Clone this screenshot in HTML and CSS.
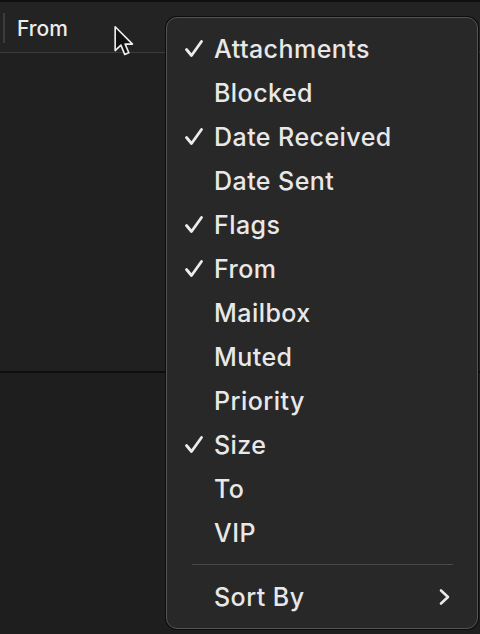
FILE: index.html
```html
<!DOCTYPE html>
<html>
<head>
<meta charset="utf-8">
<link rel="stylesheet" href="styles.css">
</head>
<body>
<div class="window">
  <div class="header">
    <span class="sep"></span>
    <span class="col-title">From</span>
  </div>
  <div class="pane"></div>
  <div class="lower"></div>

  <svg class="cursor" width="26" height="36" viewBox="0 0 24 32">
    <path d="M2 1 L2 23 L7.3 18 L10.8 26.5 L14.6 25 L11.2 17 L18 17 Z" fill="#111" stroke="#eee" stroke-width="1.5" stroke-linejoin="round"/>
  </svg>

  <div class="menu">
    <div class="item"><span class="check"><svg width="20" height="20" viewBox="0 0 20 20"><path d="M2.5 10.5 L7.5 16.5 L17.5 2.5" fill="none" stroke="#ececec" stroke-width="2.8" stroke-linecap="round" stroke-linejoin="round"/></svg></span><span>Attachments</span></div>
    <div class="item"><span class="check"></span><span>Blocked</span></div>
    <div class="item"><span class="check"><svg width="20" height="20" viewBox="0 0 20 20"><path d="M2.5 10.5 L7.5 16.5 L17.5 2.5" fill="none" stroke="#ececec" stroke-width="2.8" stroke-linecap="round" stroke-linejoin="round"/></svg></span><span>Date Received</span></div>
    <div class="item"><span class="check"></span><span>Date Sent</span></div>
    <div class="item"><span class="check"><svg width="20" height="20" viewBox="0 0 20 20"><path d="M2.5 10.5 L7.5 16.5 L17.5 2.5" fill="none" stroke="#ececec" stroke-width="2.8" stroke-linecap="round" stroke-linejoin="round"/></svg></span><span>Flags</span></div>
    <div class="item"><span class="check"><svg width="20" height="20" viewBox="0 0 20 20"><path d="M2.5 10.5 L7.5 16.5 L17.5 2.5" fill="none" stroke="#ececec" stroke-width="2.8" stroke-linecap="round" stroke-linejoin="round"/></svg></span><span>From</span></div>
    <div class="item"><span class="check"></span><span>Mailbox</span></div>
    <div class="item"><span class="check"></span><span>Muted</span></div>
    <div class="item"><span class="check"></span><span>Priority</span></div>
    <div class="item"><span class="check"><svg width="20" height="20" viewBox="0 0 20 20"><path d="M2.5 10.5 L7.5 16.5 L17.5 2.5" fill="none" stroke="#ececec" stroke-width="2.8" stroke-linecap="round" stroke-linejoin="round"/></svg></span><span>Size</span></div>
    <div class="item"><span class="check"></span><span>To</span></div>
    <div class="item"><span class="check"></span><span>VIP</span></div>
    <div class="divider"></div>
    <div class="item sub"><span class="check"></span><span class="label">Sort By</span>
      <svg class="chev" width="14" height="18" viewBox="0 0 14 18"><path d="M3 2.5 L10 9 L3 15.5" fill="none" stroke="#e8e8e8" stroke-width="2.6" stroke-linecap="round" stroke-linejoin="round"/></svg>
    </div>
  </div>
</div>
</body>
</html>
```
FILE: styles.css
```css
html, body {
  margin: 0;
  padding: 0;
  background: #1e1e1e;
  font-family: Inter, "Noto Sans", "Liberation Sans", sans-serif;
  color: #e8e8e8;
}
.window {
  position: relative;
  width: 480px;
  height: 634px;
  overflow: hidden;
  border-top: 2px solid #0f0f0f;
  box-sizing: border-box;
}
.header {
  height: 51px;
  background: #232323;
  border-bottom: 1px solid #3a3a3a;
  display: flex;
  align-items: center;
  box-sizing: border-box;
}
.sep {
  width: 2px;
  height: 30px;
  background: #3c3c3c;
  margin-left: 3px;
  margin-top: 2px;
}
.col-title {
  font-size: 21px;
  font-weight: 500;
  margin-left: 12px;
  margin-top: 2px;
  color: #ececec;
}
.pane {
  height: 318px;
  background: #202020;
  border-bottom: 2px solid #0e0e0e;
}
.lower {
  height: 262px;
  background: #1e1e1e;
}
.cursor {
  position: absolute;
  left: 113px;
  top: 23px;
}
.menu {
  position: absolute;
  left: 166px;
  top: 15px;
  width: 312px;
  height: 612px;
  box-sizing: border-box;
  background: #282828;
  border: 1px solid #545454;
  border-radius: 11px;
  box-shadow: 0 0 0 1px #0c0c0c;
  padding: 9px 0 8px 0;
}
.item {
  height: 44px;
  display: flex;
  align-items: center;
  font-size: 25px;
  font-weight: 500;
  letter-spacing: 0.45px;
  padding-left: 16px;
}
.check {
  width: 31px;
  height: 20px;
  display: flex;
  align-items: center;
}
.check svg {
  margin-left: 1px;
}
.divider {
  height: 1px;
  background: #4a4a4a;
  margin: 9px 24px 10px 25px;
}
.sub .label {
  flex: 1;
}
.chev {
  margin-right: 25px;
}
```
